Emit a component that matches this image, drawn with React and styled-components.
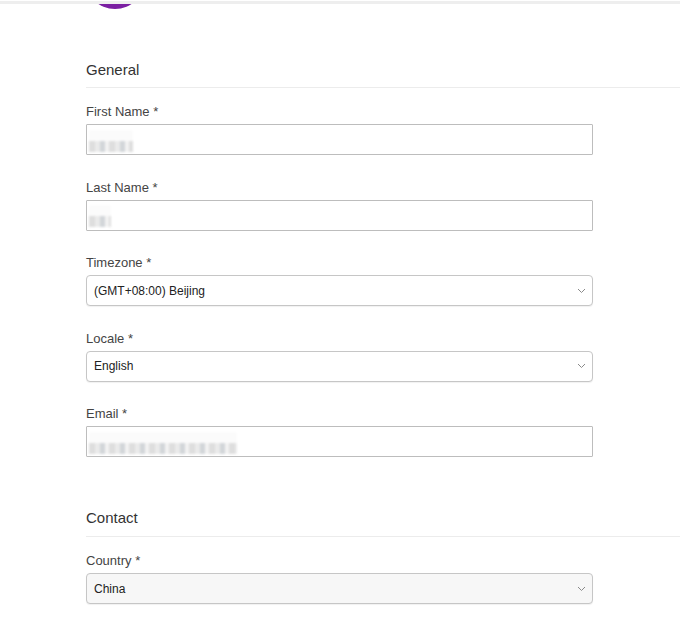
import React from "react";
import styled, { createGlobalStyle } from "styled-components";

const Global = createGlobalStyle`
  html, body { margin: 0; padding: 0; background: #fff; overflow: hidden; }
  body { font-family: "Liberation Sans", Arial, sans-serif; color: #333; }
`;

const Page = styled.div`
  width: 680px;
  height: 637px;
  overflow: hidden;
  background: #fff;
`;

const TopRule = styled.div`
  height: 3px;
  margin-top: 1px;
  background: #eeeeee;
`;

const AvatarClip = styled.div`
  height: 5px;
  overflow: hidden;
  padding-left: 85px;
`;

const Avatar = styled.div`
  width: 60px;
  height: 60px;
  border-radius: 50%;
  background: #7b1fa2;
  margin-top: -55px;
`;

const Content = styled.div`
  padding-left: 86px;
`;

const Section = styled.section`
  margin-top: ${(p) => p.$top}px;
`;

const SectionTitle = styled.h2`
  margin: 0;
  font-size: 15px;
  font-weight: 400;
  line-height: 20px;
  color: #333;
  padding-bottom: ${(p) => p.$pb || 7}px;
  border-bottom: 1px solid #ececec;
`;

const Fields = styled.div`
  width: 507px;
  display: flex;
  flex-direction: column;
  gap: 24.5px;
  padding-top: 16px;
`;

const Field = styled.div`
  display: flex;
  flex-direction: column;
`;

const Label = styled.label`
  font-size: 13px;
  line-height: 16px;
  color: #444;
  margin-bottom: 4px;
`;

const TextBox = styled.div`
  box-sizing: border-box;
  height: 31px;
  border: 1px solid #bdbdbd;
  border-radius: 1px;
  display: flex;
  align-items: center;
  padding: 2px 0 0 2px;
  background: #fff;
`;

const SelectBox = styled.div`
  box-sizing: border-box;
  height: 31px;
  border: 1px solid #c6c6c6;
  border-radius: 4px;
  box-shadow: 0 1px 1px rgba(0, 0, 0, 0.06);
  display: flex;
  align-items: center;
  justify-content: space-between;
  padding: 0 6px 0 7px;
  background: ${(p) => (p.$muted ? "#f7f7f7" : "#fff")};
  font-size: 12px;
  color: #222;
`;

const Mosaic = styled.span`
  display: inline-block;
  width: ${(p) => p.$w}px;
  height: 22px;
  background:
    linear-gradient(#fbfbfb 0 50%, transparent 50% 100%),
    repeating-linear-gradient(90deg, #d6d6d6 0 6px, #e6e6e6 6px 11px, #c8ccd0 11px 16px, #f0f0f0 16px 20px);
  filter: blur(0.8px);
  opacity: 0.8;
`;

const Chevron = () => (
  <svg width="9" height="6" viewBox="0 0 9 6" aria-hidden="true">
    <polyline points="1,1 4.5,4.5 8,1" fill="none" stroke="#8a8a8a" strokeWidth="1" />
  </svg>
);

const general = [
  { label: "First Name *", kind: "text", w: 44 },
  { label: "Last Name *", kind: "text", w: 22 },
  { label: "Timezone *", kind: "select", value: "(GMT+08:00) Beijing" },
  { label: "Locale *", kind: "select", value: "English" },
  { label: "Email *", kind: "text", w: 148 },
];

const renderField = (f) => (
  <Field key={f.label}>
    <Label>{f.label}</Label>
    {f.kind === "text" ? (
      <TextBox>
        <Mosaic $w={f.w} />
      </TextBox>
    ) : (
      <SelectBox $muted={f.muted}>
        <span>{f.value}</span>
        <Chevron />
      </SelectBox>
    )}
  </Field>
);

export default function App() {
  return (
    <Page>
      <Global />
      <TopRule />
      <AvatarClip>
        <Avatar />
      </AvatarClip>
      <Content>
        <Section $top={51}>
          <SectionTitle>General</SectionTitle>
          <Fields>{general.map(renderField)}</Fields>
        </Section>
        <Section $top={51}>
          <SectionTitle $pb={8}>Contact</SectionTitle>
          <Fields>
            {renderField({ label: "Country *", kind: "select", value: "China", muted: true })}
          </Fields>
        </Section>
      </Content>
    </Page>
  );
}
